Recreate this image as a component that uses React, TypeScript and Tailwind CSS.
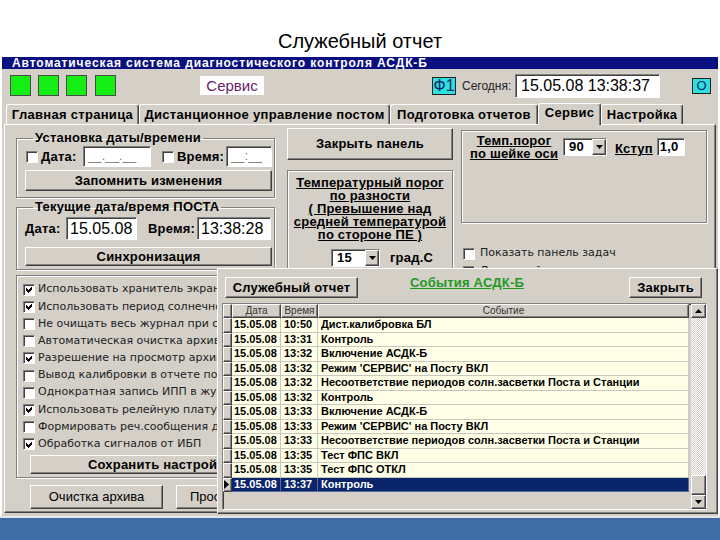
import React from "react";

const raised =
  "border border-t-white border-l-white border-r-[#404040] border-b-[#404040] shadow-[inset_-1px_-1px_0_#808080]";
const sunken =
  "border border-t-[#808080] border-l-[#808080] border-r-white border-b-white shadow-[inset_1px_1px_0_#404040]";
const etched = "border border-[#808080] shadow-[inset_1px_1px_0_#fff,1px_1px_0_#fff]";

const CheckBox = ({ checked = false }: { checked?: boolean }) => (
  <span className={`w-[12px] h-[12px] bg-white shrink-0 flex items-center justify-center ${sunken}`}>
    {checked && (
      <svg width="7" height="7" viewBox="0 0 7 7" shapeRendering="crispEdges">
        <path d="M0 2L2 4L6 0V3L2 7L0 5Z" fill="#000" />
      </svg>
    )}
  </span>
);

const Combo = ({ value, className }: { value: string; className: string }) => (
  <div className={`flex bg-white ${sunken} ${className}`}>
    <span className="flex-1 pl-[5px] text-[13px] font-bold leading-[16px]">{value}</span>
    <span className={`w-[14px] bg-[#d4d0c8] flex items-center justify-center ${raised}`}>
      <svg width="7" height="4" viewBox="0 0 7 4">
        <path d="M0 0H7L3.5 4Z" fill="#000" />
      </svg>
    </span>
  </div>
);

const Btn = ({ children, className = "" }: { children: React.ReactNode; className?: string }) => (
  <button
    type="button"
    className={`bg-[#d4d0c8] flex items-center justify-center whitespace-nowrap ${raised} ${className}`}
  >
    {children}
  </button>
);

const tabs: [string, number, boolean?][] = [
  ["Главная страница", 133],
  ["Дистанционное управление постом", 251],
  ["Подготовка отчетов", 148],
  ["Сервис", 63, true],
  ["Настройка", 82],
];

const options: [string, boolean][] = [
  ["Использовать хранитель экрана", true],
  ["Использовать период солнечной засветки", true],
  ["Не очищать весь журнал при старте", false],
  ["Автоматическая очистка архива", false],
  ["Разрешение на просмотр архива", true],
  ["Вывод калибровки в отчете поста", false],
  ["Однократная запись ИПП в журнал", false],
  ["Использовать релейную плату", true],
  ["Формировать реч.сообщения для ДСП", false],
  ["Обработка сигналов от ИБП", true],
];

const events: [string, string, string][] = [
  ["15.05.08", "10:50", "Дист.калибровка БЛ"],
  ["15.05.08", "13:31", "Контроль"],
  ["15.05.08", "13:32", "Включение АСДК-Б"],
  ["15.05.08", "13:32", "Режим 'СЕРВИС' на Посту ВКЛ"],
  ["15.05.08", "13:32", "Несоответствие периодов солн.засветки Поста и Станции"],
  ["15.05.08", "13:32", "Контроль"],
  ["15.05.08", "13:33", "Включение АСДК-Б"],
  ["15.05.08", "13:33", "Режим 'СЕРВИС' на Посту ВКЛ"],
  ["15.05.08", "13:33", "Несоответствие периодов солн.засветки Поста и Станции"],
  ["15.05.08", "13:35", "Тест ФПС ВКЛ"],
  ["15.05.08", "13:35", "Тест ФПС ОТКЛ"],
  ["15.05.08", "13:37", "Контроль"],
];

export default function App() {
  return (
    <div className="w-[720px] h-[540px] bg-white flex flex-col overflow-hidden font-['Liberation_Sans',Arial,sans-serif] text-black">
      {/* PAGE TITLE */}
      <div className="h-[57px] flex items-end justify-center pb-[4px] text-[20px] leading-[24px]">
        Служебный отчет
      </div>

      {/* WINDOW */}
      <div className="relative mx-[2px] h-[459px] bg-[#d4d0c8] flex flex-col shrink-0">
        <div className="h-[12px] bg-[#0b1080] text-white text-[12px] font-bold leading-[12px] pl-[10px] tracking-[0.9px] whitespace-nowrap overflow-hidden">
          Автоматическая система диагностического контроля АСДК-Б
        </div>

        {/* TOOLBAR */}
        <div className="h-[33px] flex items-center pl-[8px]">
          <div className="flex gap-[7px]">
            <span className="w-[21px] h-[21px] bg-[#14ee14] border border-[#4a4a4a]" />
            <span className="w-[21px] h-[21px] bg-[#14ee14] border border-[#4a4a4a]" />
            <span className="w-[21px] h-[21px] bg-[#14ee14] border border-[#4a4a4a]" />
            <span className="w-[21px] h-[21px] bg-[#14ee14] border border-[#4a4a4a] ml-[1px]" />
          </div>
          <div className="ml-[84px] w-[64px] h-[19px] bg-white text-[#6a1b6a] text-[15px] leading-[19px] text-center">
            Сервис
          </div>
          <div className="ml-[168px] w-[24px] h-[18px] bg-[#2ee0e0] border border-[#202020] text-[#0a2a6a] text-[16px] leading-[16px] text-center">
            Ф1
          </div>
          <div className="ml-[6px] w-[53px] text-[12px] text-[#222]">Сегодня:</div>
          <div className={`w-[145px] h-[24px] bg-white text-[16px] leading-[21px] pl-[5px] ${sunken}`}>
            15.05.08 13:38:37
          </div>
          <div className="ml-[32px] w-[19px] h-[16px] bg-[#2ee0e0] border border-[#202020] text-[#0a2a6a] text-[13px] leading-[14px] text-center">
            О
          </div>
        </div>

        {/* TABS */}
        <div className="h-[22px] flex items-end pl-[4px]">
          {tabs.map(([label, w, active]) => (
            <div
              key={label}
              className={`flex items-center justify-center text-[13px] font-bold tracking-[0.3px] whitespace-nowrap rounded-t-[3px] border-t border-l border-t-white border-l-white border-r border-r-[#404040] shadow-[inset_-1px_0_0_#808080] ${
                active ? "h-[22px] relative z-10 -mb-[1px] bg-[#d4d0c8] pb-[3px]" : "h-[20px]"
              }`}
              style={{ width: w }}
            >
              {label}
            </div>
          ))}
        </div>

        {/* TAB PAGE */}
        <div className={`mx-[2px] h-[389px] flex flex-col ${raised}`}>
          <div className="h-[148px] flex items-start pt-[3px] pl-[11px] text-[13px] font-bold tracking-[0.2px]">
            {/* LEFT COLUMN */}
            <div className="w-[259px] mt-[3px] flex flex-col">
              <fieldset className={`h-[67px] pl-[8px] pr-[2px] ${etched}`}>
                <legend className="ml-[8px] px-[2px] leading-[14px]">Установка даты/времени</legend>
                <div className="flex items-center h-[21px] mt-[1px]">
                  <span className="ml-[1px]">
                    <CheckBox />
                  </span>
                  <span className="ml-[3px] w-[42px]">Дата:</span>
                  <span className={`w-[68px] h-[21px] bg-white text-[#777] text-[12px] font-normal leading-[19px] pl-[4px] ${sunken}`}>
                    __.__.__
                  </span>
                  <span className="ml-[11px]">
                    <CheckBox />
                  </span>
                  <span className="ml-[3px] w-[49px]">Время:</span>
                  <span className={`w-[46px] h-[21px] bg-white text-[#777] text-[12px] font-normal leading-[19px] pl-[4px] ${sunken}`}>
                    __:__
                  </span>
                </div>
                <Btn className="w-full h-[21px] mt-[3px]">Запомнить изменения</Btn>
              </fieldset>

              <fieldset className={`h-[70px] mt-[2px] pl-[8px] pr-[2px] ${etched}`}>
                <legend className="ml-[8px] px-[2px] leading-[14px]">Текущие дата/время ПОСТА</legend>
                <div className="flex items-center h-[23px] mt-[3px]">
                  <span className="w-[41px]">Дата:</span>
                  <span className={`w-[71px] h-[23px] bg-white text-[16px] font-normal tracking-normal leading-[21px] pl-[3px] ${sunken}`}>
                    15.05.08
                  </span>
                  <span className="ml-[11px] w-[49px]">Время:</span>
                  <span className={`w-[74px] h-[23px] bg-white text-[16px] font-normal tracking-normal leading-[21px] pl-[3px] ${sunken}`}>
                    13:38:28
                  </span>
                </div>
                <Btn className="w-full h-[19px] mt-[7px]">Синхронизация</Btn>
              </fieldset>
            </div>

            {/* MIDDLE COLUMN */}
            <div className="w-[166px] ml-[12px] flex flex-col">
              <Btn className="w-full h-[32px]">Закрыть панель</Btn>
              <div className={`h-[100px] mt-[10px] pt-[5px] ${etched}`}>
                <div className="text-center leading-[13px] underline">
                  Температурный порог
                  <br />
                  по разности
                  <br />( Превышение над
                  <br />
                  средней температурой
                  <br />
                  по стороне ПЕ )
                </div>
                <div className="flex items-center mt-[7px] pl-[43px]">
                  <Combo value="15" className="w-[49px] h-[18px]" />
                  <span className="ml-[10px]">град.С</span>
                </div>
              </div>
            </div>

            {/* RIGHT COLUMN */}
            <div className="w-[246px] ml-[8px] mt-[2px] flex flex-col">
              <div className={`h-[93px] flex items-start pt-[3px] pl-[7px] ${etched}`}>
                <div className="w-[90px] text-center leading-[13px] underline">
                  Темп.порог
                  <br />
                  по шейке оси
                </div>
                <Combo value="90" className="ml-[4px] mt-[4px] w-[44px] h-[18px]" />
                <span className="ml-[8px] mt-[5px] underline">Кступ</span>
                <span className={`ml-[4px] mt-[4px] w-[28px] h-[18px] bg-white leading-[16px] pl-[2px] ${sunken}`}>
                  1,0
                </span>
              </div>
              <div className="mt-[23px] pl-[2px] flex flex-col font-['DejaVu_Sans',Verdana,sans-serif] text-[11px] font-normal tracking-normal text-[#222]">
                <div className="h-[15px] flex items-center gap-[5px]">
                  <CheckBox />
                  <span>Показать панель задач</span>
                </div>
                <div className="h-[15px] mt-[3px] flex items-center gap-[5px]">
                  <CheckBox />
                  <span>Дежурный режим</span>
                </div>
              </div>
            </div>
          </div>

          {/* OPTIONS GROUP */}
          <fieldset className={`ml-[11px] mt-[2px] w-[262px] h-[203px] pt-[5px] pl-[6px] pr-[2px] ${etched}`}>
            <div className="font-['DejaVu_Sans',Verdana,sans-serif] text-[11px] text-[#222]">
              {options.map(([label, on]) => (
                <div key={label} className="h-[17.2px] flex items-center gap-[3px] whitespace-nowrap">
                  <CheckBox checked={on} />
                  <span>{label}</span>
                </div>
              ))}
            </div>
            <Btn className="ml-[7px] mt-[2px] w-[260px] h-[19px] text-[13px] font-bold tracking-[0.2px]">
              Сохранить настройки
            </Btn>
          </fieldset>

          {/* BOTTOM BUTTONS */}
          <div className="flex mt-[7px] pl-[25px] gap-[13px] text-[13px]">
            <Btn className="w-[133px] h-[24px]">Очистка архива</Btn>
            <Btn className="w-[133px] h-[24px]">Просмотр архива</Btn>
          </div>
        </div>

        {/* EVENTS DIALOG */}
        <div
          className={`absolute left-[215px] top-[211px] w-[501px] h-[246px] bg-[#d4d0c8] flex flex-col pl-[4px] pr-[10px] pt-[8px] ${raised}`}
        >
          <div className="flex items-start ml-[3px] text-[13px] font-bold tracking-[0.2px]">
            <Btn className="w-[133px] h-[21px]">Служебный отчет</Btn>
            <span className="ml-[52px] -mt-[1px] leading-[14px] text-[#1f9a1f] underline">События АСДК-Б</span>
            <Btn className="ml-auto mr-[5px] w-[73px] h-[21px]">Закрыть</Btn>
          </div>

          <div className={`mt-[5px] h-[207px] flex bg-[#d4d0c8] ${sunken}`}>
            <div className="flex-1 flex flex-col">
              <div className="h-[14px] grid grid-cols-[9px_49px_37px_1fr] text-[10px] leading-[12px] text-[#333]">
                <span className={`bg-[#d4d0c8] ${raised}`} />
                <span className={`bg-[#d4d0c8] text-center ${raised}`}>Дата</span>
                <span className={`bg-[#d4d0c8] text-center ${raised}`}>Время</span>
                <span className={`bg-[#d4d0c8] text-center ${raised}`}>Событие</span>
              </div>
              {events.map(([d, t, e], i) => {
                const sel = i === events.length - 1;
                const line = sel ? "border-[#5a6a9a]" : "border-[#c8c8c0]";
                return (
                  <div
                    key={i}
                    className={`h-[14.5px] grid grid-cols-[9px_49px_37px_1fr] text-[11px] font-bold leading-[13px] whitespace-nowrap ${
                      sel ? "bg-[#0a246a] text-white" : "bg-[#ffffe7] text-black"
                    }`}
                  >
                    <span className={`bg-[#d4d0c8] flex items-center ${raised}`}>
                      {sel && (
                        <svg width="5" height="9" viewBox="0 0 5 9">
                          <path d="M0 0L5 4.5L0 9Z" fill="#000" />
                        </svg>
                      )}
                    </span>
                    <span className={`pl-[2px] border-r border-b ${line}`}>{d}</span>
                    <span className={`pl-[3px] border-r border-b ${line}`}>{t}</span>
                    <span className={`pl-[3px] border-r border-b ${line}`}>{e}</span>
                  </div>
                );
              })}
            </div>
            {/* SCROLLBAR */}
            <div className="w-[15px] ml-[2px] flex flex-col bg-[repeating-conic-gradient(#ffffff_0%_25%,#d4d0c8_0%_50%)] bg-[length:2px_2px]">
              <span className={`h-[14px] bg-[#d4d0c8] flex items-center justify-center ${raised}`}>
                <svg width="7" height="4" viewBox="0 0 7 4">
                  <path d="M0 4H7L3.5 0Z" fill="#000" />
                </svg>
              </span>
              <span className="flex-1" />
              <span className={`h-[20px] bg-[#d4d0c8] ${raised}`} />
              <span className={`h-[14px] bg-[#d4d0c8] flex items-center justify-center ${raised}`}>
                <svg width="7" height="4" viewBox="0 0 7 4">
                  <path d="M0 0H7L3.5 4Z" fill="#000" />
                </svg>
              </span>
            </div>
          </div>
        </div>
      </div>

      <div className="flex-1 bg-[#3e6da5] border-t-2 border-[#e6e6e6]" />
    </div>
  );
}
